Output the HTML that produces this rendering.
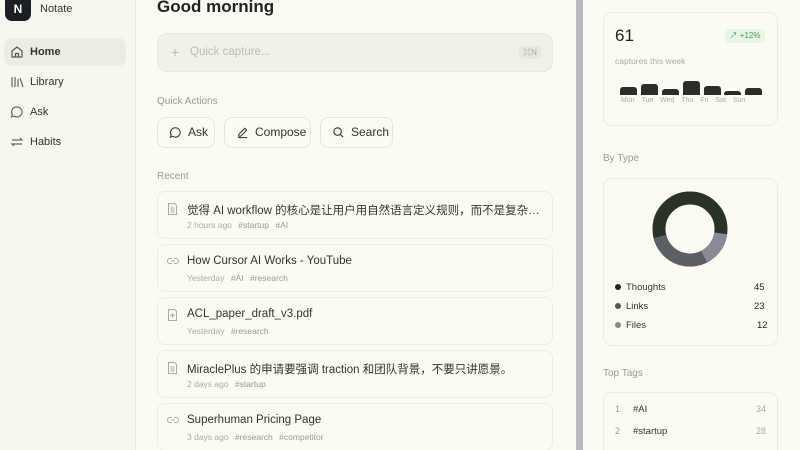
<!DOCTYPE html>
<html><head><meta charset="utf-8"><style>
*{margin:0;padding:0;box-sizing:border-box}
html,body{width:800px;height:450px;overflow:hidden}
body{background:#fbfbf4;font-family:"Liberation Sans","Noto Sans CJK SC",sans-serif;color:#222;position:relative}
.a{position:absolute;white-space:nowrap}
.side{position:absolute;left:0;top:0;width:136px;height:450px;background:#f7f7ef;border-right:1px solid #e8e8e0}
.nav{position:absolute;left:4px;width:122px;height:28px;border-radius:8px;font-size:11px;color:#333;padding-left:26px;line-height:28px}
.nav svg{position:absolute;left:6px;top:7px}
.card{position:absolute;border:1px solid #ececE2;border-radius:9px;background:#fbfbf4}
.btn{position:absolute;top:117px;height:31px;border:1px solid #e6e6dc;border-radius:8px;font-size:12px;color:#333;line-height:29px;padding-left:30px}
.btn svg{position:absolute;left:11px;top:8px}
.rc{position:absolute;left:157px;width:396px;height:48px;border:1px solid #eeeee4;border-radius:8px}
.rc .t{position:absolute;left:29px;top:10px;width:358px;overflow:hidden;text-overflow:ellipsis;font-size:11.5px;color:#333;white-space:nowrap}
.rc .m{position:absolute;left:29px;top:28px;font-size:8.5px;color:#aaa;white-space:nowrap}
.rc .m b{font-weight:normal;color:#999;margin-left:4px}
.rc svg{position:absolute;left:9px;top:11px}
.lbl{font-size:10px;color:#999}
</style></head><body>
<div class="side">
 <div class="a" style="left:5px;top:-6px;width:26px;height:27px;background:#1b1f23;border-radius:7px;color:#fff;font-weight:bold;font-size:12px;text-align:center;line-height:30px">N</div>
 <div class="a" style="left:40px;top:3px;font-size:11px;color:#333">Notate</div>
 <div class="nav" style="top:38px;background:#ececE2;font-weight:bold"><svg width="14" height="14" viewBox="0 0 14 14" fill="none" stroke="#555" stroke-width="1.2"><path d="M2 6L7 2l5 4v6H2z M5.5 12V8.5h3V12"/></svg>Home</div>
 <div class="nav" style="top:68px"><svg width="14" height="14" viewBox="0 0 14 14" fill="none" stroke="#666" stroke-width="1.2"><path d="M2 2v10M5 2v10M8 4v8M10 3l3 9"/></svg>Library</div>
 <div class="nav" style="top:98px"><svg width="14" height="14" viewBox="0 0 14 14" fill="none" stroke="#666" stroke-width="1.2"><path d="M7 2a5 5 0 1 1-3 9l-2.5 1 .8-2.5A5 5 0 0 1 7 2z"/></svg>Ask</div>
 <div class="nav" style="top:128px"><svg width="14" height="14" viewBox="0 0 14 14" fill="none" stroke="#666" stroke-width="1.2"><path d="M2 5h10l-2-2M12 9H2l2 2"/></svg>Habits</div>
</div>
<div class="a" style="left:157px;top:-3px;font-size:17px;font-weight:bold;color:#222">Good morning</div>
<div class="a" style="left:157px;top:33px;width:396px;height:39px;background:#f1f1e8;border:1px solid #e9e9df;border-radius:10px"></div>
<div class="a" style="left:171px;top:44px;font-size:14px;color:#bbb">+</div>
<div class="a" style="left:190px;top:46px;font-size:11.5px;color:#bbb">Quick capture...</div>
<div class="a" style="left:519px;top:46px;width:22px;height:13px;background:#e8e8df;border-radius:3px;font-size:8px;color:#aaa;text-align:center;line-height:13px">⌘N</div>
<div class="a lbl" style="left:157px;top:96px">Quick Actions</div>
<div class="btn" style="left:157px;width:58px"><svg width="13" height="13" viewBox="0 0 14 14" fill="none" stroke="#444" stroke-width="1.2"><path d="M7 2a5 5 0 1 1-3 9l-2.5 1 .8-2.5A5 5 0 0 1 7 2z"/></svg>Ask</div>
<div class="btn" style="left:224px;width:87px"><svg width="13" height="13" viewBox="0 0 14 14" fill="none" stroke="#444" stroke-width="1.2"><path d="M9.5 2.5l2 2L5 11H3V9z M2 12.5h10"/></svg>Compose</div>
<div class="btn" style="left:320px;width:73px"><svg width="13" height="13" viewBox="0 0 14 14" fill="none" stroke="#444" stroke-width="1.3"><circle cx="6" cy="6" r="4"/><path d="M9 9l3 3"/></svg>Search</div>
<div class="a lbl" style="left:157px;top:171px">Recent</div>
<div class="rc" style="top:191px"><svg width="11" height="12" viewBox="0 0 11 12" fill="none" stroke="#aaa"><path d="M1.5 .5h6l2 2v9h-8z M3.5 5h4M3.5 7h4M3.5 9h4"/></svg><div class="t">觉得 AI workflow 的核心是让用户用自然语言定义规则，而不是复杂的 if-then-else</div><div class="m">2 hours ago <b>#startup</b> <b>#AI</b></div></div>
<div class="rc" style="top:244px"><svg width="12" height="10" viewBox="0 0 12 10" fill="none" stroke="#aaa"><path d="M5 2.5H3a2.5 2.5 0 0 0 0 5h2M7 2.5h2a2.5 2.5 0 0 1 0 5H7M4 5h4"/></svg><div class="t">How Cursor AI Works - YouTube</div><div class="m">Yesterday <b>#AI</b> <b>#research</b></div></div>
<div class="rc" style="top:297px"><svg width="11" height="12" viewBox="0 0 11 12" fill="none" stroke="#aaa"><path d="M1.5 .5h6l2 2v9h-8z M5.5 9V5M3.5 7l2-2 2 2"/></svg><div class="t">ACL_paper_draft_v3.pdf</div><div class="m">Yesterday <b>#research</b></div></div>
<div class="rc" style="top:350px"><svg width="11" height="12" viewBox="0 0 11 12" fill="none" stroke="#aaa"><path d="M1.5 .5h6l2 2v9h-8z M3.5 5h4M3.5 7h4M3.5 9h4"/></svg><div class="t">MiraclePlus 的申请要强调 traction 和团队背景，不要只讲愿景。</div><div class="m">2 days ago <b>#startup</b></div></div>
<div class="rc" style="top:403px"><svg width="12" height="10" viewBox="0 0 12 10" fill="none" stroke="#aaa"><path d="M5 2.5H3a2.5 2.5 0 0 0 0 5h2M7 2.5h2a2.5 2.5 0 0 1 0 5H7M4 5h4"/></svg><div class="t">Superhuman Pricing Page</div><div class="m">3 days ago <b>#research</b> <b>#competitor</b></div></div>
<div class="a" style="left:576px;top:0;width:7px;height:450px;background:#b8b8bf"></div>
<div class="a" style="left:583px;top:0;width:217px;height:450px;background:#fbfbf4"></div>
<div class="card" style="left:603px;top:12px;width:175px;height:114px"></div>
<div class="a" style="left:615px;top:26px;font-size:17px;color:#222">61</div>
<div class="a" style="left:725px;top:29px;width:40px;height:14px;background:#e6f7e6;border-radius:4px;font-size:8px;color:#4a9a5a;text-align:center;line-height:14px">↗ +12%</div>
<div class="a" style="left:615px;top:56px;font-size:8.5px;color:#aaa">captures this week</div>
<div class="a" style="left:620px;top:87px;width:17px;height:8px;background:#2a2e2a;border-radius:3px 3px 0 0"></div>
<div class="a" style="left:641px;top:84px;width:17px;height:11px;background:#2a2e2a;border-radius:3px 3px 0 0"></div>
<div class="a" style="left:662px;top:89px;width:17px;height:6px;background:#2a2e2a;border-radius:3px 3px 0 0"></div>
<div class="a" style="left:683px;top:81px;width:17px;height:14px;background:#2a2e2a;border-radius:3px 3px 0 0"></div>
<div class="a" style="left:704px;top:86px;width:17px;height:9px;background:#2a2e2a;border-radius:3px 3px 0 0"></div>
<div class="a" style="left:724px;top:91px;width:17px;height:4px;background:#2a2e2a;border-radius:3px 3px 0 0"></div>
<div class="a" style="left:745px;top:88px;width:17px;height:7px;background:#2a2e2a;border-radius:3px 3px 0 0"></div>
<div class="a" style="left:621px;top:97px;font-size:7px;color:#aaa;word-spacing:5px">Mon Tue Wed Thu Fri Sat Sun</div>
<div class="a lbl" style="left:603px;top:153px">By Type</div>
<div class="card" style="left:603px;top:178px;width:175px;height:168px"></div>
<svg class="a" style="left:652px;top:191px" width="76" height="76" viewBox="0 0 76 76">
<circle cx="38" cy="38" r="31" fill="none" stroke="#2a3226" stroke-width="13"/>
<circle cx="38" cy="38" r="31" fill="none" stroke="#8a8a94" stroke-width="13" stroke-dasharray="29.8 200" transform="rotate(8 38 38)"/>
<circle cx="38" cy="38" r="31" fill="none" stroke="#5d5f66" stroke-width="13" stroke-dasharray="55.7 200" transform="rotate(63 38 38)"/>
</svg>
<div class="a" style="left:615px;top:284px;width:6px;height:6px;border-radius:3px;background:#222"></div>
<div class="a" style="left:626px;top:282px;font-size:9.5px;color:#333">Thoughts</div><div class="a" style="left:754px;top:282px;font-size:9.5px">45</div>
<div class="a" style="left:615px;top:303px;width:6px;height:6px;border-radius:3px;background:#555"></div>
<div class="a" style="left:626px;top:301px;font-size:9.5px;color:#333">Links</div><div class="a" style="left:754px;top:301px;font-size:9.5px">23</div>
<div class="a" style="left:615px;top:322px;width:6px;height:6px;border-radius:3px;background:#888"></div>
<div class="a" style="left:626px;top:320px;font-size:9.5px;color:#333">Files</div><div class="a" style="left:757px;top:320px;font-size:9.5px">12</div>
<div class="a lbl" style="left:603px;top:368px">Top Tags</div>
<div class="card" style="left:603px;top:392px;width:175px;height:70px"></div>
<div class="a" style="left:615px;top:404px;font-size:9px;color:#999">1</div><div class="a" style="left:633px;top:404px;font-size:9.5px;color:#333">#AI</div><div class="a" style="left:756px;top:404px;font-size:9px;color:#aaa">34</div>
<div class="a" style="left:615px;top:426px;font-size:9px;color:#999">2</div><div class="a" style="left:633px;top:426px;font-size:9.5px;color:#333">#startup</div><div class="a" style="left:756px;top:426px;font-size:9px;color:#aaa">28</div>
</body></html>
